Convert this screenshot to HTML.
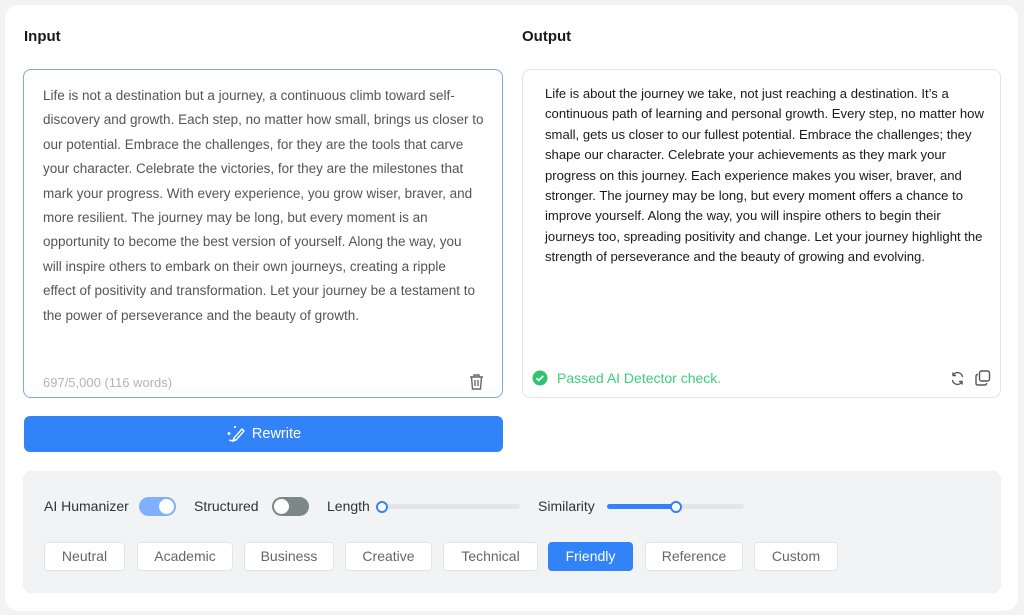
<!DOCTYPE html>
<html><head><style>
body{margin:0;width:1024px;height:615px;background:#f3f3f3;font-family:"Liberation Sans",sans-serif;overflow:hidden;position:relative}
.card{position:absolute;left:5px;top:5px;width:1013px;height:606px;background:#fff;border-radius:14px}
.h{position:absolute;top:28px;font-weight:bold;font-size:15px;color:#1a1a1a}
.inbox{position:absolute;left:23px;top:69px;width:480px;height:329px;border:1px solid #7aa9f2;border-radius:8px;box-sizing:border-box}
.intext{position:absolute;left:43px;top:84px;font-size:13.5px;line-height:24.4px;color:#555;white-space:nowrap}
.count{position:absolute;left:43px;top:375px;font-size:13px;color:#b4b4b4}
.outbox{position:absolute;left:522px;top:69px;width:479px;height:329px;border:1px solid #e3e3e3;border-radius:8px;box-sizing:border-box}
.outtext{position:absolute;left:545px;top:84px;font-size:13.1px;line-height:20.4px;color:#1a1a1a;white-space:nowrap}
.pass{position:absolute;left:557px;top:370px;font-size:14px;color:#3ecf7a}
.btn{position:absolute;left:24px;top:416px;width:479px;height:36px;background:#3183f7;border-radius:6px;color:#fff;font-size:14.5px;text-align:center;line-height:36px}
.panel{position:absolute;left:23px;top:471px;width:978px;height:122px;background:#f2f3f5;border-radius:8px}
.lbl{position:absolute;top:498px;font-size:14px;color:#333}
.tag{position:absolute;top:542px;height:29px;background:#fff;border:1px solid #e4e4e4;border-radius:4px;box-sizing:border-box;font-size:14px;color:#666;text-align:center;line-height:27px}
</style></head><body>
<div class="card"></div>
<div class="h" style="left:24px">Input</div>
<div class="h" style="left:522px">Output</div>
<div class="inbox"></div>
<div class="intext">Life is not a destination but a journey, a continuous climb toward self-<br>discovery and growth. Each step, no matter how small, brings us closer to<br>our potential. Embrace the challenges, for they are the tools that carve<br>your character. Celebrate the victories, for they are the milestones that<br>mark your progress. With every experience, you grow wiser, braver, and<br>more resilient. The journey may be long, but every moment is an<br>opportunity to become the best version of yourself. Along the way, you<br>will inspire others to embark on their own journeys, creating a ripple<br>effect of positivity and transformation. Let your journey be a testament to<br>the power of perseverance and the beauty of growth.</div>
<div class="count">697/5,000 (116 words)</div>
<svg style="position:absolute;left:469px;top:374px" width="15" height="16" viewBox="0 0 15 16" fill="none" stroke="#666" stroke-width="1.4"><path d="M1 3h13M5 3V1h5v2M2.5 3l1 12h8l1-12M6 6v6M9 6v6"/></svg>
<div class="outbox"></div>
<div class="outtext">Life is about the journey we take, not just reaching a destination. It’s a<br>continuous path of learning and personal growth. Every step, no matter how<br>small, gets us closer to our fullest potential. Embrace the challenges; they<br>shape our character. Celebrate your achievements as they mark your<br>progress on this journey. Each experience makes you wiser, braver, and<br>stronger. The journey may be long, but every moment offers a chance to<br>improve yourself. Along the way, you will inspire others to begin their<br>journeys too, spreading positivity and change. Let your journey highlight the<br>strength of perseverance and the beauty of growing and evolving.</div>
<svg style="position:absolute;left:532px;top:370px" width="16" height="16" viewBox="0 0 16 16"><circle cx="8" cy="8" r="7.5" fill="#2fc36a"/><path d="M4.5 8.2l2.3 2.2 4.5-4.5" stroke="#fff" stroke-width="1.8" fill="none"/></svg>
<div class="pass">Passed AI Detector check.</div>
<svg style="position:absolute;left:950px;top:371px" width="15" height="15" viewBox="0 0 15 15" fill="none" stroke="#555" stroke-width="1.4"><path d="M12.5 6A5 5 0 0 0 3 4.5M2.5 9A5 5 0 0 0 12 10.5M3 1.5v3h3M12 13.5v-3H9"/></svg>
<svg style="position:absolute;left:975px;top:370px" width="16" height="16" viewBox="0 0 16 16" fill="none" stroke="#555" stroke-width="1.4"><rect x="4.5" y="1" width="10" height="10" rx="2"/><path d="M3 4.5H2.5A1.5 1.5 0 0 0 1 6v7.5A1.5 1.5 0 0 0 2.5 15H10a1.5 1.5 0 0 0 1.5-1.5V13"/></svg>
<div class="btn"><svg style="vertical-align:-4px;margin-right:6px" width="20" height="18" viewBox="0 0 20 18" fill="none" stroke="#fff" stroke-width="1.4"><path d="M8 14L16 5l2 2-8 9-3 1zM3 16c2 1 4 1 6-1M3 8v3M1.5 9.5h3M9 2v2M8 3h2"/></svg>Rewrite</div>
<div class="panel"></div>
<div class="lbl" style="left:44px">AI Humanizer</div>
<div style="position:absolute;left:139px;top:497px;width:37px;height:19px;border-radius:10px;background:#7fb0fb"><div style="position:absolute;right:2px;top:2px;width:15px;height:15px;border-radius:50%;background:#fff"></div></div>
<div class="lbl" style="left:194px">Structured</div>
<div style="position:absolute;left:272px;top:497px;width:37px;height:19px;border-radius:10px;background:#7c8787"><div style="position:absolute;left:2px;top:2px;width:15px;height:15px;border-radius:50%;background:#fff"></div></div>
<div class="lbl" style="left:327px">Length</div>
<div style="position:absolute;left:378px;top:504px;width:142px;height:5px;border-radius:3px;background:#e3e5eb"></div>
<div style="position:absolute;left:376px;top:501px;width:8px;height:8px;border-radius:50%;border:2px solid #3183f7;background:#fff"></div>
<div class="lbl" style="left:538px">Similarity</div>
<div style="position:absolute;left:607px;top:504px;width:137px;height:5px;border-radius:3px;background:#e3e5eb"></div>
<div style="position:absolute;left:607px;top:504px;width:70px;height:5px;border-radius:3px;background:#3183f7"></div>
<div style="position:absolute;left:670px;top:501px;width:8px;height:8px;border-radius:50%;border:2px solid #3183f7;background:#fff"></div>
<div class="tag" style="left:44px;width:81px">Neutral</div>
<div class="tag" style="left:137px;width:96px">Academic</div>
<div class="tag" style="left:244px;width:90px">Business</div>
<div class="tag" style="left:345px;width:87px">Creative</div>
<div class="tag" style="left:443px;width:95px">Technical</div>
<div class="tag" style="left:548px;width:85px;background:#3183f7;border-color:#3183f7;color:#fff">Friendly</div>
<div class="tag" style="left:645px;width:98px">Reference</div>
<div class="tag" style="left:754px;width:84px">Custom</div>
</body></html>
